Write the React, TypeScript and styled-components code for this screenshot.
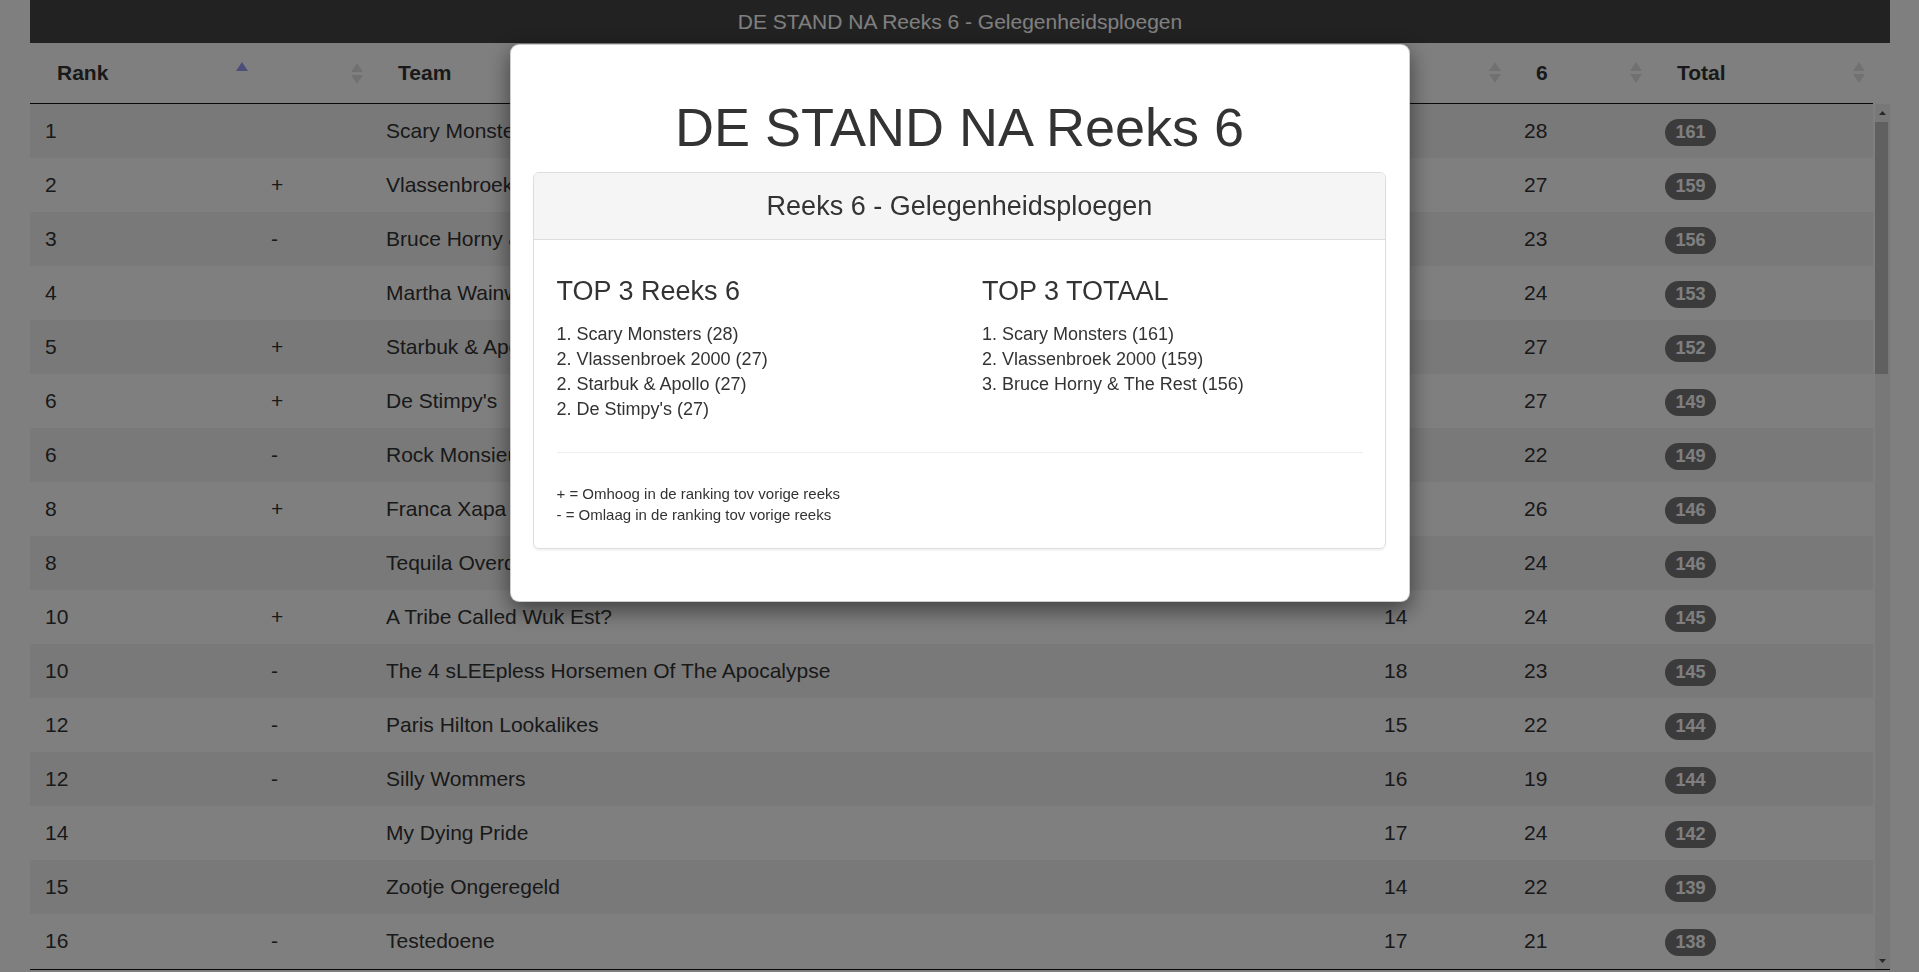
import React from 'react';
import styled, { createGlobalStyle } from 'styled-components';

const GlobalStyle = createGlobalStyle`
    html, body {
        margin: 0;
        height: 100%;
        overflow: hidden;
        background: #fff;
    }
    body {
        font-family: 'Liberation Sans', Arial, sans-serif;
        font-size: 21px;
        line-height: 1.42857;
        color: #333;
    }
`;

type Row = {
    rank: string;
    move: string;
    team: string;
    r5: string;
    r6: string;
    total: string;
};

const rows: Row[] = [
    { rank: '1', move: '', team: 'Scary Monsters', r5: '27', r6: '28', total: '161' },
    { rank: '2', move: '+', team: 'Vlassenbroek 2000', r5: '26', r6: '27', total: '159' },
    { rank: '3', move: '-', team: 'Bruce Horny & The Rest', r5: '25', r6: '23', total: '156' },
    { rank: '4', move: '', team: 'Martha Wainwright', r5: '26', r6: '24', total: '153' },
    { rank: '5', move: '+', team: 'Starbuk & Apollo', r5: '24', r6: '27', total: '152' },
    { rank: '6', move: '+', team: "De Stimpy's", r5: '25', r6: '27', total: '149' },
    { rank: '6', move: '-', team: 'Rock Monsieurs', r5: '23', r6: '22', total: '149' },
    { rank: '8', move: '+', team: 'Franca Xapa', r5: '24', r6: '26', total: '146' },
    { rank: '8', move: '', team: 'Tequila Overdose', r5: '22', r6: '24', total: '146' },
    { rank: '10', move: '+', team: 'A Tribe Called Wuk Est?', r5: '14', r6: '24', total: '145' },
    { rank: '10', move: '-', team: 'The 4 sLEEpless Horsemen Of The Apocalypse', r5: '18', r6: '23', total: '145' },
    { rank: '12', move: '-', team: 'Paris Hilton Lookalikes', r5: '15', r6: '22', total: '144' },
    { rank: '12', move: '-', team: 'Silly Wommers', r5: '16', r6: '19', total: '144' },
    { rank: '14', move: '', team: 'My Dying Pride', r5: '17', r6: '24', total: '142' },
    { rank: '15', move: '', team: 'Zootje Ongeregeld', r5: '14', r6: '22', total: '139' },
    { rank: '16', move: '-', team: 'Testedoene', r5: '17', r6: '21', total: '138' },
];

const columnWidths = [226, 115, 998, 140, 141, 223];

type Sort = 'asc' | 'both';

const columns: { label: string; sort: Sort }[] = [
    { label: 'Rank', sort: 'asc' },
    { label: '', sort: 'both' },
    { label: 'Team', sort: 'both' },
    { label: '5', sort: 'both' },
    { label: '6', sort: 'both' },
    { label: 'Total', sort: 'both' },
];

const topReeks = ['1. Scary Monsters (28)', '2. Vlassenbroek 2000 (27)', '2. Starbuk & Apollo (27)', "2. De Stimpy's (27)"];
const topTotaal = ['1. Scary Monsters (161)', '2. Vlassenbroek 2000 (159)', '3. Bruce Horny & The Rest (156)'];

const SortIcon = ({ sort }: { sort: Sort }) => (
    <IconBox>
        <svg width="12" height="21" viewBox="0 0 12 21">
            {sort === 'asc' ? (
                <polygon points="6,0 12,9 0,9" fill="#9a9af2" />
            ) : (
                <>
                    <polygon points="6,0 12,9 0,9" fill="#e2e2e2" />
                    <polygon points="0,12 12,12 6,21" fill="#e2e2e2" />
                </>
            )}
        </svg>
    </IconBox>
);

const ScrollArrow = ({ down }: { down?: boolean }) => (
    <ScrollButton>
        <svg width="7" height="4" viewBox="0 0 7 4">
            <polygon points={down ? '0,0 7,0 3.5,4' : '3.5,0 7,4 0,4'} fill="#505050" />
        </svg>
    </ScrollButton>
);

const Cols = () => (
    <colgroup>
        {columnWidths.map((w, i) => (
            <col key={i} style={{ width: w }} />
        ))}
    </colgroup>
);

export default function App() {
    return (
        <>
            <GlobalStyle />
            <Page>
                <TitleBar>DE STAND NA Reeks 6 - Gelegenheidsploegen</TitleBar>
                <ScrollHead>
                    <Table>
                        <Cols />
                        <thead>
                            <tr>
                                {columns.map((c, i) => (
                                    <HeadCell key={i}>
                                        <HeadInner>
                                            <span>{c.label}</span>
                                            <SortIcon sort={c.sort} />
                                        </HeadInner>
                                    </HeadCell>
                                ))}
                            </tr>
                        </thead>
                    </Table>
                </ScrollHead>
                <ScrollBody>
                    <Viewport>
                        <Table>
                            <Cols />
                            <tbody>
                                {rows.map((r, i) => (
                                    <BodyRow key={i} $odd={i % 2 === 0}>
                                        <Cell>{r.rank}</Cell>
                                        <Cell>{r.move}</Cell>
                                        <Cell>{r.team}</Cell>
                                        <Cell>{r.r5}</Cell>
                                        <Cell>{r.r6}</Cell>
                                        <Cell>
                                            <Badge>{r.total}</Badge>
                                        </Cell>
                                    </BodyRow>
                                ))}
                            </tbody>
                        </Table>
                    </Viewport>
                    <ScrollTrack>
                        <ScrollArrow />
                        <ScrollThumb />
                        <ScrollRest />
                        <ScrollArrow down />
                    </ScrollTrack>
                </ScrollBody>
            </Page>
            <Backdrop />
            <ModalWrap>
                <ModalDialog>
                    <ModalBody>
                        <ModalTitle>DE STAND NA Reeks 6</ModalTitle>
                        <Panel>
                            <PanelHeading>Reeks 6 - Gelegenheidsploegen</PanelHeading>
                            <PanelBody>
                                <TopGrid>
                                    <div>
                                        <TopTitle>TOP 3 Reeks 6</TopTitle>
                                        {topReeks.map((t, i) => (
                                            <TopLine key={i}>{t}</TopLine>
                                        ))}
                                    </div>
                                    <div>
                                        <TopTitle>TOP 3 TOTAAL</TopTitle>
                                        {topTotaal.map((t, i) => (
                                            <TopLine key={i}>{t}</TopLine>
                                        ))}
                                    </div>
                                </TopGrid>
                                <Divider />
                                <Legend>+ = Omhoog in de ranking tov vorige reeks</Legend>
                                <Legend>- = Omlaag in de ranking tov vorige reeks</Legend>
                            </PanelBody>
                        </Panel>
                    </ModalBody>
                </ModalDialog>
            </ModalWrap>
        </>
    );
}

const Page = styled.div`
    width: 1860px;
    margin-left: 30px;
`;

const TitleBar = styled.div`
    height: 43px;
    line-height: 43px;
    background: #444;
    color: #fff;
    text-align: center;
    font-size: 21px;
`;

const ScrollHead = styled.div`
    padding-right: 17px;
`;

const Table = styled.table`
    width: 1843px;
    table-layout: fixed;
    border-collapse: collapse;
    border-spacing: 0;
`;

const HeadCell = styled.th`
    height: 60px;
    padding: 0 0 0 27px;
    text-align: left;
    font-weight: bold;
    vertical-align: middle;
    border-bottom: 1px solid #111;
`;

const HeadInner = styled.div`
    display: flex;
    align-items: center;
    justify-content: space-between;
`;

const IconBox = styled.span`
    display: flex;
    justify-content: center;
    width: 28px;
    flex-shrink: 0;
`;

const ScrollBody = styled.div`
    display: flex;
    height: 865px;
    border-bottom: 1px solid #111;
`;

const Viewport = styled.div`
    width: 1845px;
    overflow: hidden;
`;

const ScrollTrack = styled.div`
    display: flex;
    flex-direction: column;
    width: 15px;
    background: #f1f1f1;
`;

const ScrollButton = styled.div`
    display: flex;
    align-items: center;
    justify-content: center;
    height: 17px;
    flex-shrink: 0;
`;

const ScrollThumb = styled.div`
    height: 252px;
    width: 13px;
    margin-top: 1px;
    background: #c1c1c1;
`;

const ScrollRest = styled.div`
    flex: 1;
`;

const BodyRow = styled.tr<{ $odd: boolean }>`
    background: ${(p) => (p.$odd ? '#f2f2f2' : '#fff')};
`;

const Cell = styled.td`
    height: 54px;
    padding: 0 15px;
    box-sizing: border-box;
    vertical-align: middle;
    white-space: nowrap;
    overflow: hidden;
`;

const Badge = styled.span`
    display: inline-block;
    padding: 4.5px 10.5px;
    font-size: 18px;
    font-weight: bold;
    line-height: 1;
    color: #fff;
    background: #777;
    border-radius: 15px;
    text-align: center;
`;

const Backdrop = styled.div`
    position: fixed;
    inset: 0;
    background: rgba(0, 0, 0, 0.5);
`;

const ModalWrap = styled.div`
    position: fixed;
    inset: 0;
`;

const ModalDialog = styled.div`
    width: 900px;
    margin: 44px auto 0;
    box-sizing: border-box;
    background: #fff;
    border: 1.5px solid rgba(0, 0, 0, 0.2);
    border-radius: 9px;
    box-shadow: 0 7.5px 22.5px rgba(0, 0, 0, 0.5);
`;

const ModalBody = styled.div`
    padding: 22.5px;
`;

const ModalTitle = styled.h1`
    margin: 30px 0 15px;
    font-size: 54px;
    font-weight: normal;
    line-height: 1.1;
    text-align: center;
    color: #333;
`;

const Panel = styled.div`
    margin-bottom: 30px;
    border: 1.5px solid #ddd;
    border-radius: 6px;
    box-shadow: 0 1.5px 1.5px rgba(0, 0, 0, 0.05);
`;

const PanelHeading = styled.div`
    padding: 15px 22.5px;
    font-size: 27px;
    line-height: 36px;
    text-align: center;
    background: #f5f5f5;
    border-bottom: 1.5px solid #ddd;
    border-radius: 5px 5px 0 0;
`;

const PanelBody = styled.div`
    padding: 22.5px;
`;

const TopGrid = styled.div`
    display: grid;
    grid-template-columns: 1fr 1fr;
    column-gap: 45px;
`;

const TopTitle = styled.h4`
    margin: 15px 0;
    font-size: 27px;
    font-weight: normal;
    line-height: 1.1;
`;

const TopLine = styled.div`
    font-size: 18px;
    line-height: 25px;
`;

const Divider = styled.hr`
    margin: 30px 0;
    border: 0;
    border-top: 1.5px solid #eee;
`;

const Legend = styled.div`
    font-size: 15px;
    line-height: 21px;
`;
